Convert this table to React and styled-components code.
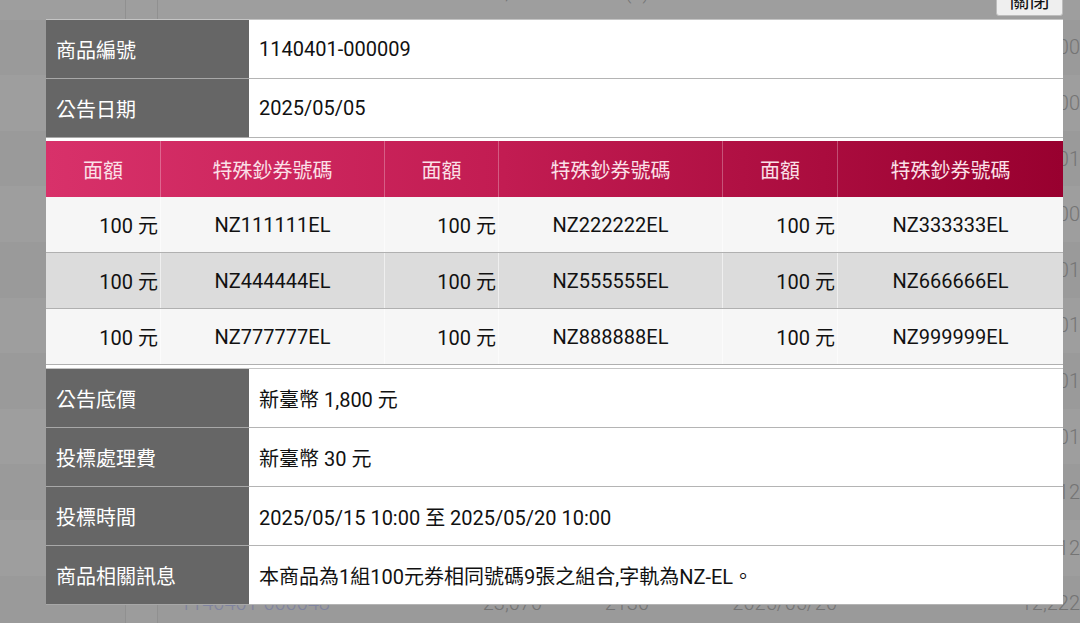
import React from "react";
import styled, { createGlobalStyle } from "styled-components";

const GlobalStyle = createGlobalStyle`
  html, body { margin: 0; padding: 0; }
  body {
    width: 1080px;
    height: 623px;
    overflow: hidden;
    background: #ffffff;
    font-family: Roboto, "Noto Sans CJK TC", sans-serif;
  }
  * { box-sizing: border-box; }
`;

/* ---------- background page (dimmed) ---------- */
const Page = styled.div`
  margin-top: -36px;
  display: flex;
  flex-direction: column;
`;

const PageRow = styled.div`
  display: grid;
  grid-template-columns: 126px 32px 300px 84px 107px 188px 243px;
  height: 55.6px;
  background: ${(p) => (p.$alt ? "#f8f8f8" : "#ffffff")};
  color: #bcbcbc;
  font-size: 20px;
  font-weight: 300;
`;

const PageCell = styled.div`
  display: flex;
  align-items: center;
  justify-content: ${(p) => (p.$right ? "flex-end" : "flex-start")};
  padding-left: ${(p) => p.$pl || 0}px;
  border-right: ${(p) => (p.$line ? "1px solid #e8e8e8" : "none")};
  background: ${(p) => (p.$light ? "rgba(255,255,255,0.6)" : "transparent")};
  color: ${(p) => (p.$link ? "#cdd3ff" : "inherit")};
  white-space: nowrap;
`;

const Overlay = styled.div`
  position: fixed;
  inset: 0;
  background: rgba(0, 0, 0, 0.38);
`;

/* ---------- modal ---------- */
const Modal = styled.div`
  position: fixed;
  top: 19px;
  left: 46px;
  width: 1017px;
  background: #ffffff;
  display: flex;
  flex-direction: column;
  gap: 3px;
  color: #111111;
  font-size: 20px;
`;

const CloseButton = styled.button`
  position: absolute;
  top: -37px;
  right: 0;
  width: 67px;
  height: 34px;
  background: #efefef;
  border: 1px solid #bdbdbd;
  border-radius: 3px;
  font-family: Roboto, "Noto Sans CJK TC", sans-serif;
  font-size: 20px;
  color: #111;
  padding: 0;
  display: flex;
  align-items: center;
  justify-content: center;
`;

const InfoTable = styled.div`
  display: grid;
  grid-template-columns: 203px 1fr;
  border-top: 1px solid #c4c4c4;
`;

const Label = styled.div`
  height: 59px;
  background: #666666;
  color: #ffffff;
  display: flex;
  align-items: center;
  padding-left: 10px;
  border-bottom: 1px solid #a8a8a8;
`;

const Value = styled.div`
  height: 59px;
  background: #ffffff;
  display: flex;
  align-items: center;
  padding-left: 10px;
  border-bottom: 1px solid #b4b4b4;
  white-space: nowrap;
`;

const NoteTable = styled.div`
  display: grid;
  grid-template-columns: 115px 224px 114px 224px 115px 1fr;
`;

const HeadRow = styled.div`
  grid-column: 1 / -1;
  display: grid;
  grid-template-columns: subgrid;
  height: 56px;
  background: linear-gradient(90deg, #d8316a 0%, #c21c52 45%, #98002f 100%);
`;

const HeadCell = styled.div`
  display: flex;
  align-items: center;
  justify-content: center;
  color: #fbe0e8;
  border-right: ${(p) => (p.$last ? "none" : "1px solid rgba(255,255,255,0.28)")};
`;

const DataRow = styled.div`
  grid-column: 1 / -1;
  display: grid;
  grid-template-columns: subgrid;
  height: 56px;
  background: ${(p) => (p.$alt ? "#dcdcdc" : "#f6f6f6")};
  border-bottom: 1px solid #b0b0b0;
`;

const AmountCell = styled.div`
  display: flex;
  align-items: center;
  justify-content: flex-end;
  padding-right: 2px;
  border-right: 1px solid rgba(255, 255, 255, 0.55);
  white-space: nowrap;
`;

const CodeCell = styled.div`
  display: flex;
  align-items: center;
  justify-content: center;
  border-right: ${(p) => (p.$last ? "none" : "1px solid rgba(255,255,255,0.55)")};
`;

const pageRows = [
  { id: "1140401-000001", amt: "21,500", cnt: "(1)", date: "2025/05/20", last: "10,500" },
  { id: "1140401-000002", amt: "22,800", cnt: "1980", date: "2025/05/20", last: "11,200" },
  { id: "1140401-000003", amt: "18,600", cnt: "1720", date: "2025/05/20", last: "10,800" },
  { id: "1140401-000004", amt: "20,100", cnt: "1850", date: "2025/05/20", last: "12,001" },
  { id: "1140401-000005", amt: "19,400", cnt: "1660", date: "2025/05/20", last: "11,500" },
  { id: "1140401-000006", amt: "23,300", cnt: "2040", date: "2025/05/20", last: "12,301" },
  { id: "1140401-000007", amt: "24,700", cnt: "2210", date: "2025/05/20", last: "13,101" },
  { id: "1140401-000008", amt: "21,900", cnt: "1930", date: "2025/05/20", last: "14,201" },
  { id: "1140401-000009", amt: "22,600", cnt: "2010", date: "2025/05/20", last: "15,101" },
  { id: "1140401-000046", amt: "20,900", cnt: "1990", date: "2025/05/20", last: "11,112" },
  { id: "1140401-000047", amt: "22,300", cnt: "2080", date: "2025/05/20", last: "12,112" },
  { id: "1140401-000048", amt: "23,070", cnt: "2130", date: "2025/05/20", last: "12,222" },
];

const notes = [
  ["NZ111111EL", "NZ222222EL", "NZ333333EL"],
  ["NZ444444EL", "NZ555555EL", "NZ666666EL"],
  ["NZ777777EL", "NZ888888EL", "NZ999999EL"],
];

export default function App() {
  return (
    <>
      <GlobalStyle />
      <Page>
        {pageRows.map((r, i) => (
          <PageRow key={r.id} $alt={i % 2 === 1}>
            <PageCell $line />
            <PageCell $line $light />
            <PageCell $pl={22} $link>{r.id}</PageCell>
            <PageCell $right>{r.amt}</PageCell>
            <PageCell $right>{r.cnt}</PageCell>
            <PageCell $right>{r.date}</PageCell>
            <PageCell $right>{r.last}</PageCell>
          </PageRow>
        ))}
      </Page>
      <Overlay />
      <Modal>
        <CloseButton>關閉</CloseButton>
        <InfoTable>
          <Label>商品編號</Label>
          <Value>1140401-000009</Value>
          <Label>公告日期</Label>
          <Value>2025/05/05</Value>
        </InfoTable>
        <NoteTable>
          <HeadRow>
            <HeadCell>面額</HeadCell>
            <HeadCell>特殊鈔券號碼</HeadCell>
            <HeadCell>面額</HeadCell>
            <HeadCell>特殊鈔券號碼</HeadCell>
            <HeadCell>面額</HeadCell>
            <HeadCell $last>特殊鈔券號碼</HeadCell>
          </HeadRow>
          {notes.map((row, i) => (
            <DataRow key={i} $alt={i === 1}>
              {row.map((code, j) => (
                <React.Fragment key={code}>
                  <AmountCell>100 元</AmountCell>
                  <CodeCell $last={j === 2}>{code}</CodeCell>
                </React.Fragment>
              ))}
            </DataRow>
          ))}
        </NoteTable>
        <InfoTable>
          <Label>公告底價</Label>
          <Value>新臺幣 1,800 元</Value>
          <Label>投標處理費</Label>
          <Value>新臺幣 30 元</Value>
          <Label>投標時間</Label>
          <Value>2025/05/15 10:00 至 2025/05/20 10:00</Value>
          <Label>商品相關訊息</Label>
          <Value>本商品為1組100元券相同號碼9張之組合,字軌為NZ-EL。</Value>
        </InfoTable>
      </Modal>
    </>
  );
}
